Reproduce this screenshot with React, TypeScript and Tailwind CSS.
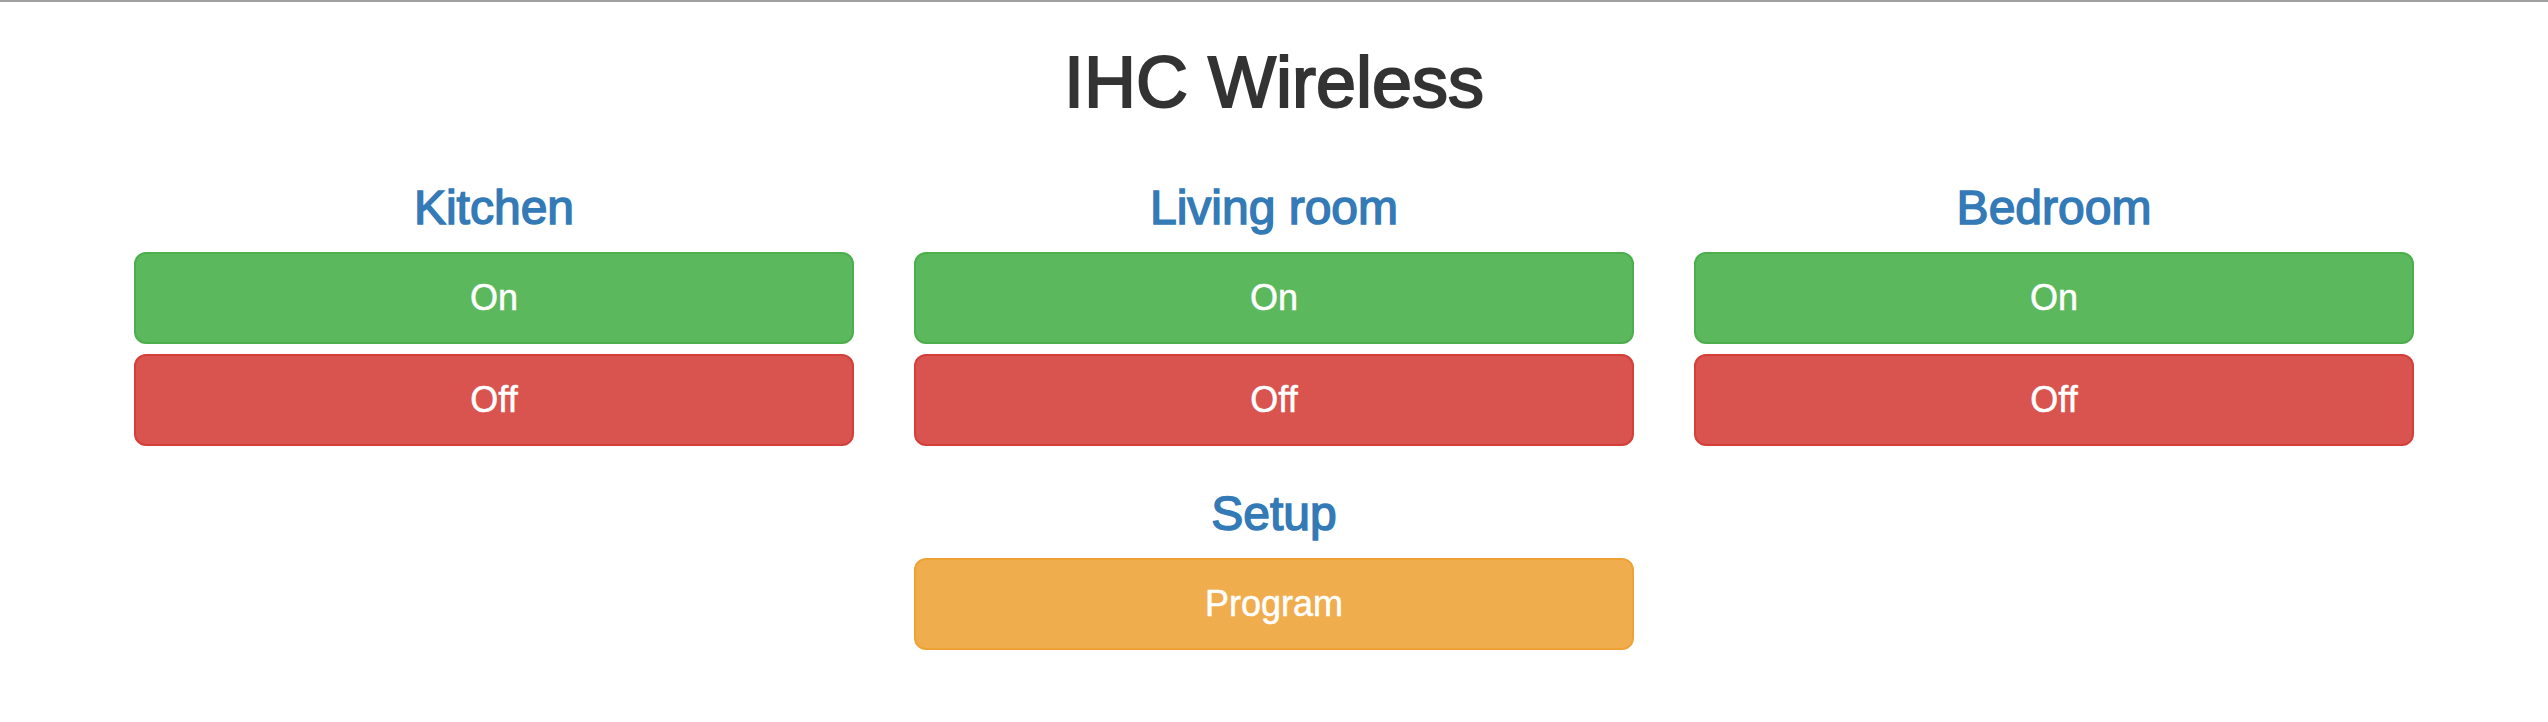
const rooms = ['Kitchen', 'Living room', 'Bedroom'];

const btnBase =
  'block w-full rounded-[12px] border-2 py-[20px] text-center text-[36px] leading-[48px] text-white [-webkit-text-stroke:0.5px_currentColor]';

// headings in the shot are Helvetica Neue medium; a thin stroke thickens Liberation Sans to match
function RoomTitle({ children }: { children: string }) {
  return (
    <h3 className="mb-[17px] text-center text-[48px] font-medium leading-[1.1] text-[#337ab7] [-webkit-text-stroke:1.5px_currentColor]">
      {children}
    </h3>
  );
}

export default function App() {
  return (
    <div className="min-h-screen border-t-2 border-[#a0a0a0] bg-white font-['Liberation_Sans',Arial,sans-serif] text-[#333]">
      <div className="mx-auto w-[2280px]">
        <h1 className="mt-[41px] text-center text-[72px] font-medium leading-[1.1] [-webkit-text-stroke:2px_currentColor]">
          IHC Wireless
        </h1>

        <div className="mt-[60px] grid grid-cols-3 gap-x-[60px]">
          {rooms.map((room) => (
            <div key={room}>
              <RoomTitle>{room}</RoomTitle>
              <div className="flex flex-col gap-[10px]">
                <button className={`${btnBase} border-[#4cae4c] bg-[#5cb85c]`}>On</button>
                <button className={`${btnBase} border-[#d43f3a] bg-[#d9534f]`}>Off</button>
              </div>
            </div>
          ))}
        </div>

        <div className="mt-[42px] grid grid-cols-3 gap-x-[60px]">
          <div className="col-start-2">
            <RoomTitle>Setup</RoomTitle>
            <button className={`${btnBase} border-[#eea236] bg-[#f0ad4e]`}>Program</button>
          </div>
        </div>
      </div>
    </div>
  );
}
